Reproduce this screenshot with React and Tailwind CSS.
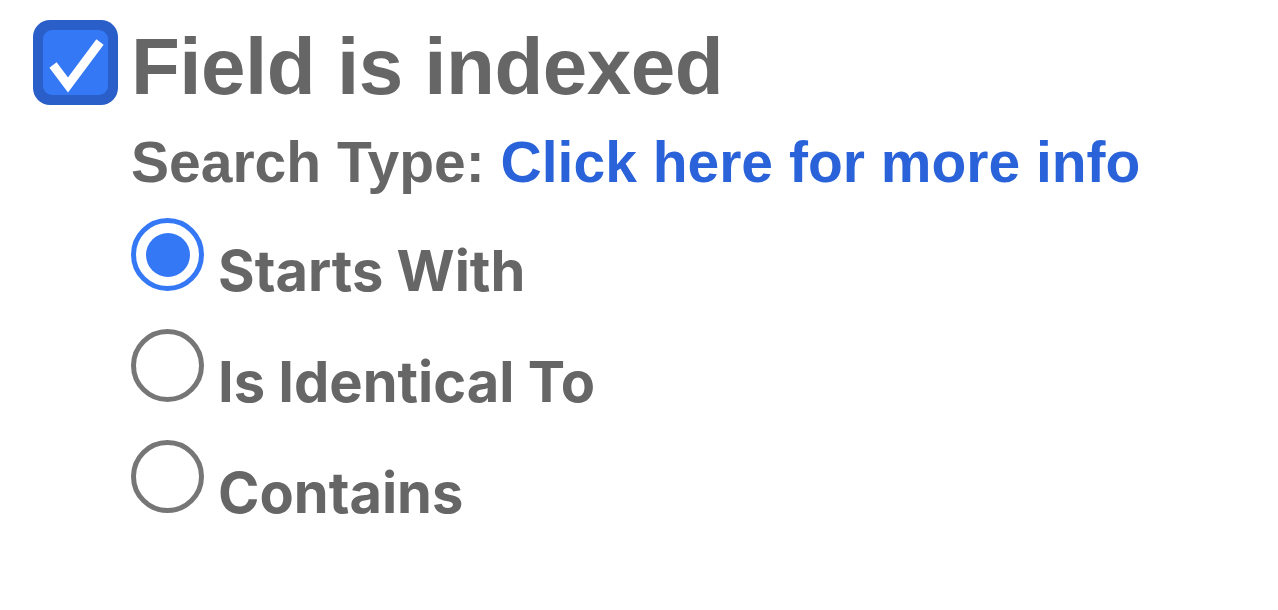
import React, { useState } from 'react';

const options = ['Starts With', 'Is Identical To', 'Contains'];

const Radio = ({ label, checked, onSelect }) => (
  <label className="flex items-baseline gap-[14px] cursor-pointer" onClick={onSelect}>
    <span
      className={`inline-block w-[73px] h-[73px] rounded-full border-[5px] shrink-0 ${
        checked ? 'border-[#3478f6]' : 'border-[#767676]'
      }`}
    >
      {checked && <span className="block mx-auto mt-[9.5px] w-[44px] h-[44px] rounded-full bg-[#3478f6]" />}
    </span>
    <span className="text-[56px] leading-none font-bold text-[#666666] font-['Inter',sans-serif]">
      {label}
    </span>
  </label>
);

export default function App() {
  const [indexed, setIndexed] = useState(true);
  const [searchType, setSearchType] = useState('Starts With');

  return (
    <div className="bg-white min-h-screen pt-[20px] pl-[33px] font-['Liberation_Sans',Arial,sans-serif] text-[#666666]">
      {/* checkbox row */}
      <div className="flex items-start gap-[13px]">
        <button
          type="button"
          onClick={() => setIndexed(!indexed)}
          className="w-[85px] h-[85px] rounded-[17px] bg-[#2a5fc9] p-[10px] shrink-0"
        >
          <span className="block w-full h-full rounded-[9px] bg-[#3478f6] relative">
            {indexed && (
              <svg viewBox="0 0 65 65" className="absolute inset-0 w-full h-full">
                <polyline points="10,35 25,55 57,12" fill="none" stroke="white" strokeWidth="9" />
              </svg>
            )}
          </span>
        </button>
        <h1 className="text-[80px] leading-none font-bold tracking-[-0.5px] mt-[7px]">Field is indexed</h1>
      </div>

      <div className="pl-[98px]">
        <p className="mt-[27px] text-[57px] leading-none font-bold">
          <span>Search Type: </span>
          <a href="#" className="text-[#2a62d9]">Click here for more info</a>
        </p>

        <div className="mt-[27px] flex flex-col gap-[30px]">
          {options.map((o) => (
            <Radio key={o} label={o} checked={searchType === o} onSelect={() => setSearchType(o)} />
          ))}
        </div>
      </div>
    </div>
  );
}
